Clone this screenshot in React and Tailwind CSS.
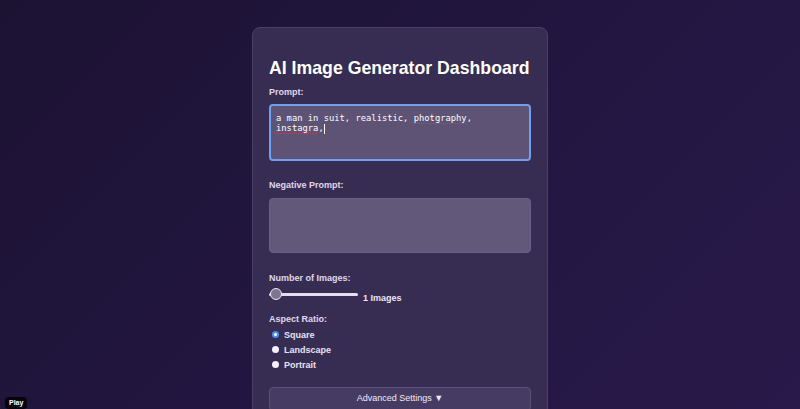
import React from "react";

export default function App() {
  const sans = { fontFamily: '"Liberation Sans", Arial, sans-serif' };
  return (
    <div
      className="relative w-[800px] h-[409px] overflow-hidden bg-[linear-gradient(135deg,#1c1232_0%,#221640_50%,#29194a_100%)]"
      style={sans}
    >
      <div className="mx-auto mt-[27px] w-[296px] h-[420px] rounded-[8px] border border-[#4a4065] bg-[#372c52] px-[16px] pt-[30px]">
        <h1 className="text-[17.7px] leading-[20px] font-bold text-white whitespace-nowrap">
          AI Image Generator Dashboard
        </h1>
        <div className="mt-[9px] text-[9px] leading-[11px] font-bold text-[#e0d8ee]">Prompt:</div>
        <div className="mt-[6px] h-[57px] rounded-[4px] border-2 border-[#6f9ff0] bg-[#5e5375] px-[5px] pt-[7px] text-[8.8px] leading-[10px] text-white" style={{ fontFamily: '"DejaVu Sans Mono", "Liberation Mono", monospace' }}>
          <div>a man in suit, realistic, <span className="underline decoration-dotted decoration-[#c04060] decoration-1 underline-offset-2">photgraphy</span>,</div>
          <div><span className="underline decoration-dotted decoration-[#c04060] decoration-1 underline-offset-2">instagra</span>,<span className="inline-block w-[1px] h-[10px] bg-white align-middle" /></div>
        </div>
        <div className="mt-[19px] text-[9px] leading-[11px] font-bold text-[#e0d8ee]">Negative Prompt:</div>
        <div className="mt-[7px] h-[55px] rounded-[4px] border border-[#6a6082] bg-[#625879]" />
        <div className="mt-[20px] text-[9px] leading-[11px] font-bold text-[#e0d8ee]">Number of Images:</div>
        <div className="mt-[4px] flex items-center h-[12px]">
          <div className="relative w-[89px] h-[12px] flex items-center">
            <div className="w-full h-[3px] rounded-full bg-[#e4dcf2]" />
            <div className="absolute left-[1px] top-0 w-[12px] h-[12px] rounded-full bg-[#7e7590] border-[1.5px] border-[#ece6f6]" />
          </div>
          <span className="ml-[5px] mt-[8px] text-[9px] leading-[10px] font-bold text-[#ece6f6]">1 Images</span>
        </div>
        <div className="mt-[14px] text-[9px] leading-[11px] font-bold text-[#e0d8ee]">Aspect Ratio:</div>
        <div className="mt-[2px] flex flex-col">
          {["Square", "Landscape", "Portrait"].map((t, i) => (
            <div key={t} className="flex items-center h-[15px]">
              {i === 0 ? (
                <span className="ml-[3px] w-[7px] h-[7px] rounded-full bg-[#4d8ff0] flex items-center justify-center">
                  <span className="w-[3px] h-[3px] rounded-full bg-white" />
                </span>
              ) : (
                <span className="ml-[3px] w-[7px] h-[7px] rounded-full bg-[#f4f0fa]" />
              )}
              <span className="ml-[5px] text-[9px] leading-[10px] font-bold text-[#e8e2f2]">{t}</span>
            </div>
          ))}
        </div>
        <div className="mt-[15px] h-[24px] rounded-[4px] border border-[#5a5078] bg-[#463b63] flex items-center justify-center text-[9px] text-[#f0eaf8]">
          Advanced Settings ▼
        </div>
      </div>
      <div className="absolute left-[5px] top-[397px] rounded-[4px] bg-black/80 px-[4px] py-[1px] text-[7px] leading-[10px] font-bold text-white">
        Play
      </div>
    </div>
  );
}
